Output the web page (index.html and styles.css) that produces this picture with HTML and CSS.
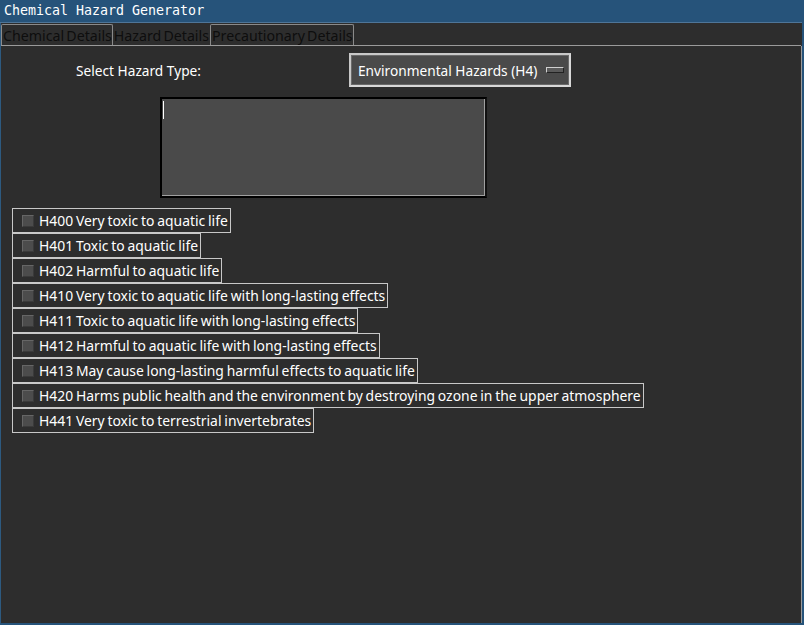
FILE: index.html
```html
<!DOCTYPE html>
<html>
<head>
<meta charset="utf-8">
<link rel="stylesheet" href="styles.css">
</head>
<body>
<div class="window">
  <div class="titlebar">Chemical Hazard Generator</div>
  <div class="tabs">
    <div class="tab">Chemical Details</div>
    <div class="tab selected">Hazard Details</div>
    <div class="tab">Precautionary Details</div>
  </div>
  <div class="panel">
    <div class="select-row">
      <div class="label">Select Hazard Type:</div>
      <div class="menubutton">
        <span>Environmental Hazards (H4)</span>
        <span class="indicator"></span>
      </div>
    </div>
    <div class="textbox"><span class="cursor"></span></div>
    <div class="checks">
      <div class="check"><span class="box"></span>H400 Very toxic to aquatic life</div>
      <div class="check"><span class="box"></span>H401 Toxic to aquatic life</div>
      <div class="check"><span class="box"></span>H402 Harmful to aquatic life</div>
      <div class="check"><span class="box"></span>H410 Very toxic to aquatic life with long-lasting effects</div>
      <div class="check"><span class="box"></span>H411 Toxic to aquatic life with long-lasting effects</div>
      <div class="check"><span class="box"></span>H412 Harmful to aquatic life with long-lasting effects</div>
      <div class="check"><span class="box"></span>H413 May cause long-lasting harmful effects to aquatic life</div>
      <div class="check"><span class="box"></span>H420 Harms public health and the environment by destroying ozone in the upper atmosphere</div>
      <div class="check"><span class="box"></span>H441 Very toxic to terrestrial invertebrates</div>
    </div>
  </div>
</div>
</body>
</html>
```

FILE: styles.css
```css
html, body {
  margin: 0;
  padding: 0;
  background: #2d2d2d;
}
.window {
  width: 804px;
  height: 625px;
  box-sizing: border-box;
  display: flex;
  flex-direction: column;
  border-left: 1px solid #2d5a80;
  border-right: 2px solid #26537a;
  border-bottom: 2px solid #26537a;
  background: #2d2d2d;
  font-family: "Noto Sans", sans-serif;
  font-size: 13.7px;
  color: #ffffff;
}
.titlebar {
  height: 23px;
  box-sizing: border-box;
  background: #26537a;
  border-bottom: 1px solid #4f7597;
  margin-left: -1px;
  padding-left: 4px;
  font-family: "DejaVu Sans Mono", monospace;
  font-size: 13.3px;
  line-height: 22px;
  color: #ffffff;
}
.tabs {
  display: flex;
  height: 23px;
  box-sizing: border-box;
  padding-top: 1px;
  border-bottom: 1px solid #9a9a9a;
  margin-right: 1px;
}
.tab {
  height: 21px;
  box-sizing: border-box;
  border: 1px solid #8a8a8a;
  border-bottom: none;
  border-radius: 2px 2px 0 0;
  padding: 0 0 0 1px;
  line-height: 21px;
  color: #0e0e0e;
  font-size: 14.2px;
  word-spacing: -1.5px;
}
.tab.selected {
  border-color: transparent;
  padding: 0;
}
.panel {
  flex: 1;
  border-right: 1px solid #9a9a9a;
  padding: 7px 0 0 11px;
}
.select-row {
  display: flex;
  align-items: center;
  height: 34px;
}
.label {
  padding-left: 64px;
  box-sizing: border-box;
  width: 337px;
}
.menubutton {
  width: 222px;
  height: 34px;
  box-sizing: border-box;
  border: 2px solid #c8c8c8;
  border-right-color: #d8d8d8;
  border-bottom-color: #d8d8d8;
  outline: 1px solid #6a6a6a;
  outline-offset: -3px;
  background: #4a4a4a;
  display: flex;
  align-items: center;
  justify-content: space-between;
  padding: 0 5px 0 7px;
}
.indicator {
  width: 18px;
  height: 6px;
  box-sizing: border-box;
  background: #5a5a5a;
  border: 1px solid #d0d0d0;
  border-right-color: #222;
  border-bottom-color: #222;
}
.textbox {
  margin: 10px 0 0 148px;
  width: 327px;
  height: 101px;
  box-sizing: border-box;
  border: 2px solid #000000;
  border-right-color: #111;
  background: #4a4a4a;
  box-shadow: inset -1px -1px 0 #a0a0a0;
  padding: 2px 0 0 1px;
}
.cursor {
  display: block;
  width: 1px;
  height: 18px;
  background: #ffffff;
}
.checks {
  margin-top: 10px;
  display: flex;
  flex-direction: column;
  align-items: flex-start;
}
.check {
  height: 25px;
  box-sizing: border-box;
  border: 1px solid #c8c8c8;
  display: flex;
  align-items: center;
  padding: 0 2px 0 9px;
  white-space: nowrap;
  font-size: 13.9px;
  word-spacing: -0.8px;
}
.box {
  width: 12px;
  height: 12px;
  box-sizing: border-box;
  background: #4c4c4c;
  border: 1px solid #666666;
  border-right-color: #3a3a3a;
  border-bottom-color: #3a3a3a;
  margin-right: 5px;
}
```
